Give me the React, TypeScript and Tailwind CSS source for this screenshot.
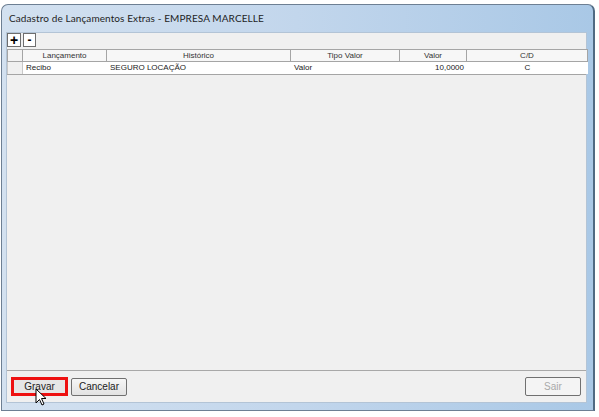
import React from "react";

const cols = [
  { w: 84, h: "Lançamento", v: "Recibo", align: "left" },
  { w: 184, h: "Histórico", v: "SEGURO LOCAÇÃO", align: "left" },
  { w: 109, h: "Tipo Valor", v: "Valor", align: "left" },
  { w: 67, h: "Valor", v: "10,0000", align: "right" },
  { w: 121, h: "C/D", v: "C", align: "center" },
];

export default function App() {
  return (
    <div
      className="w-[599px] h-[417px] bg-white relative overflow-hidden"
      style={{ fontFamily: '"Liberation Sans", Arial, sans-serif' }}
    >
      <div className="absolute left-[1px] top-[4px] w-[594px] h-[407px] rounded-t-[7px] border border-[#6d7f93] border-r-[2px] border-r-[#4f6a83] bg-gradient-to-r from-[#d3e1f0] via-[#c2d6ec] to-[#a9c8e6] flex flex-col">
        <div className="h-[27px] flex items-center pl-[7px] text-[10px] tracking-[0.1px] text-[#1e1e1e] shrink-0" style={{ fontFamily: 'Lato, "Noto Sans", sans-serif' }}>
          Cadastro de Lançamentos Extras - EMPRESA MARCELLE
        </div>
        <div className="flex-1 ml-[4px] mr-[6px] mb-[7px] bg-[#f0f0f0] border border-[#b3c4d6] flex flex-col">
          {/* toolbar */}
          <div className="h-[16px] flex items-start gap-[2px] shrink-0">
            <div className="w-[14px] h-[14px] border border-[#6e6e6e] bg-white flex items-center justify-center text-[14px] font-bold leading-none text-black">+</div>
            <div className="w-[13px] h-[14px] border border-[#6e6e6e] bg-white flex items-center justify-center text-[12px] font-bold leading-none text-black">-</div>
          </div>
          {/* grid */}
          <div className="flex-1 flex flex-col border-b border-[#a8a8a8]">
            <div className="flex h-[13px] text-[8px] text-[#333]">
              <div className="w-[16px] bg-[#f3f3f3] border border-[#a5a5a5] shrink-0" />
              {cols.map((c) => (
                <div
                  key={c.h}
                  className="bg-[#f7f7f7] border-t border-b border-r border-[#a5a5a5] flex items-center justify-center shrink-0"
                  style={{ width: c.w }}
                >
                  {c.h}
                </div>
              ))}
            </div>
            <div className="flex h-[13px] text-[8px] text-[#222] border-b border-[#a5a5a5]">
              <div className="w-[16px] bg-[#f0f0f0] border-l border-r border-[#c8c8c8] shrink-0" />
              {cols.map((c) => (
                <div
                  key={c.h}
                  className={
                    "bg-white flex items-center shrink-0 px-[3px] " +
                    (c.align === "right"
                      ? "justify-end"
                      : c.align === "center"
                      ? "justify-center"
                      : "justify-start")
                  }
                  style={{ width: c.w }}
                >
                  {c.v}
                </div>
              ))}
            </div>
          </div>
          {/* bottom buttons */}
          <div className="h-[31px] flex items-center px-[4px] shrink-0">
            <div className="border-[3px] border-[#ee1111] p-0">
              <button className="w-[51px] h-[13px] bg-[#e6e6e6] text-[10px] text-[#222] flex items-center justify-center leading-none">
                Gravar
              </button>
            </div>
            <button className="ml-[3px] w-[56px] h-[18px] border border-[#707070] rounded-[2px] bg-gradient-to-b from-[#f6f6f6] to-[#e2e2e2] text-[10px] text-[#222] flex items-center justify-center leading-none">
              Cancelar
            </button>
            <div className="flex-1" />
            <button className="w-[56px] h-[19px] border border-[#707070] rounded-[2px] bg-[#f4f4f4] text-[10px] text-[#a9a9a9] flex items-center justify-center leading-none mr-[1px]">
              Sair
            </button>
          </div>
        </div>
      </div>
      {/* mouse cursor */}
      <svg className="absolute left-[35px] top-[388px]" width="12" height="19" viewBox="0 0 12 19">
        <path d="M1 1 L1 15 L4.5 11.5 L7 17 L9 16 L6.5 10.5 L11 10.5 Z" fill="white" stroke="black" strokeWidth="1" strokeLinejoin="round" />
      </svg>
    </div>
  );
}
